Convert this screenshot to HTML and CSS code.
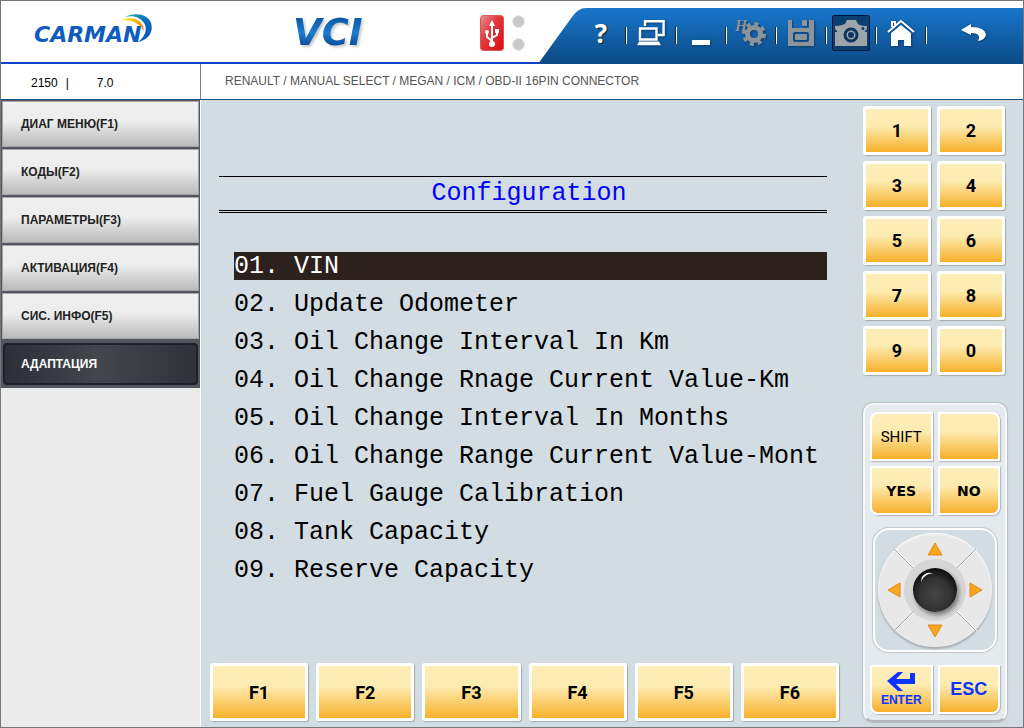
FILE: index.html
```html
<!DOCTYPE html>
<html lang="ru">
<head>
    <meta charset="UTF-8">
    <meta name="viewport" content="width=device-width, initial-scale=1.0">
    <title>Carman VCI</title>
    <link rel="stylesheet" href="styles.css">
</head>
<body>
    <div class="app">
        <header class="header">
            <div class="brand">
                <svg width="124" height="40" viewBox="0 0 124 40" role="img" aria-label="Carman">
                    <defs>
                        <linearGradient id="swoosh" x1="0" y1="0" x2="1" y2="1">
                            <stop offset="0" stop-color="#1fb5a0"/>
                            <stop offset="0.5" stop-color="#0d6ec0"/>
                            <stop offset="1" stop-color="#0a4fb8"/>
                        </linearGradient>
                        <linearGradient id="flame" x1="0" y1="0" x2="1" y2="1">
                            <stop offset="0" stop-color="#fff200"/>
                            <stop offset="1" stop-color="#e0641c"/>
                        </linearGradient>
                    </defs>
                    <text class="brand-text" x="0" y="32">CARMAN</text>
                    <path fill="url(#swoosh)" d="M91 7C101 2 114 4 117 13C120 22 114 30 104 32C111 27 114 19 110 13C106 7 99 5 91 7Z"/>
                    <path fill="url(#flame)" d="M88 10C98 6 109 9 110 21C106 13 98 10 88 10Z"/>
                </svg>
            </div>
            <div class="product">
                <svg width="90" height="48" viewBox="0 0 90 48" role="img" aria-label="VCI">
                    <defs>
                        <linearGradient id="vci" x1="0" y1="0" x2="0" y2="1">
                            <stop offset="0.2" stop-color="#0c5cac"/>
                            <stop offset="0.5" stop-color="#1b7dd0"/>
                            <stop offset="0.8" stop-color="#0d4f98"/>
                        </linearGradient>
                    </defs>
                    <text class="product-text" x="0" y="39" fill="url(#vci)">VCI</text>
                </svg>
            </div>
            <div class="link-state">
                <svg width="24" height="38" viewBox="0 0 24 38" role="img" aria-label="USB">
                    <defs>
                        <linearGradient id="usb" x1="0" y1="0" x2="1" y2="1">
                            <stop offset="0" stop-color="#f09090"/>
                            <stop offset="0.4" stop-color="#e03c40"/>
                            <stop offset="1" stop-color="#e00808"/>
                        </linearGradient>
                    </defs>
                    <rect x="0.5" y="1.5" width="23" height="35" rx="3" fill="url(#usb)" stroke="#cf5a5a"/>
                    <g fill="none" stroke="#fff" stroke-width="2">
                        <path d="M12 30V10M12 27L7 23V18M12 24L17 21V17"/>
                    </g>
                    <circle cx="12" cy="30" r="3" fill="#fff"/>
                    <circle cx="7" cy="18" r="2" fill="#fff"/>
                    <path d="M12 6L15 12H9ZM15 15H19V19H15Z" fill="#fff"/>
                </svg>
                <div class="leds">
                    <span class="led"></span>
                    <span class="led"></span>
                </div>
            </div>
            <nav class="toolbar">
                <svg class="toolbar-edge" width="48" height="56" viewBox="0 0 48 56" aria-hidden="true">
                    <defs>
                        <linearGradient id="edge" x1="0" y1="0" x2="0" y2="1">
                            <stop offset="0" stop-color="#1976cc"/>
                            <stop offset="1" stop-color="#0b4a84"/>
                        </linearGradient>
                    </defs>
                    <path d="M0 56L34 9Q40 0 48 0V56Z" fill="url(#edge)"/>
                </svg>
                <div class="tools">
                    <button class="tool" type="button" aria-label="Help"><span class="tool-help">?</span></button>
                    <span class="sep"></span>
                    <button class="tool" type="button" aria-label="Connection">
                        <svg width="30" height="28" viewBox="0 0 30 28" fill="none" stroke="#fff" stroke-width="2.4">
                            <path d="M9 7V2.2H27.6V16H22"/>
                            <path d="M4 9.5H20.5V20.5H4Z"/>
                            <path d="M1 26.2H25L23 22.5H3Z" fill="#fff" stroke="none"/>
                        </svg>
                    </button>
                    <span class="sep"></span>
                    <button class="tool tool-min" type="button" aria-label="Minimize">
                        <svg width="18" height="6" viewBox="0 0 18 6"><path d="M0 0H18V5H0Z" fill="#fff"/></svg>
                    </button>
                    <span class="sep"></span>
                    <button class="tool" type="button" aria-label="Settings">
                        <svg width="34" height="30" viewBox="0 0 34 30">
                            <text class="tool-h" x="1" y="13">H</text>
                            <circle cx="20" cy="16" r="6.5" fill="none" stroke="#8c9499" stroke-width="5"/>
                            <circle cx="20" cy="16" r="10" fill="none" stroke="#8c9499" stroke-width="4" stroke-dasharray="4 3.85"/>
                        </svg>
                    </button>
                    <span class="sep"></span>
                    <button class="tool" type="button" aria-label="Save">
                        <svg width="26" height="26" viewBox="0 0 26 26">
                            <path fill="#8c9499" fill-rule="evenodd" d="M0 0H4V8H21V0H26V26H0ZM7 12Q5 12 5 14V20Q5 22 7 22H19Q21 22 21 20V14Q21 12 19 12Z"/>
                            <rect x="14" y="0" width="5" height="6" rx="1" fill="#8c9499"/>
                            <rect x="7" y="14" width="12" height="6" rx="1" fill="#8c9499"/>
                        </svg>
                    </button>
                    <span class="sep"></span>
                    <button class="tool tool-pressed" type="button" aria-label="Screenshot">
                        <svg width="32" height="26" viewBox="0 0 32 26">
                            <path fill="#9ea5a9" fill-rule="evenodd" d="M0 6Q6 6 10 4L12 0H21L23 4Q26 6 32 6V9L30 11V12H32V26H0V12H2V11L0 9ZM28 7A1.5 1.5 0 1 0 28 10A1.5 1.5 0 1 0 28 7Z"/>
                            <circle cx="16" cy="15" r="6" fill="#9ea5a9" stroke="#0a3560" stroke-width="3"/>
                            <circle cx="16" cy="15" r="3" fill="#0a3560"/>
                        </svg>
                    </button>
                    <span class="sep"></span>
                    <button class="tool" type="button" aria-label="Home">
                        <svg width="28" height="28" viewBox="0 0 28 28">
                            <path fill="#fff" d="M4 14L14 6L24 14V27H17V21H11V27H4Z"/>
                            <path fill="none" stroke="#1560a8" stroke-width="1" d="M2 15L14 5L26 15"/>
                            <path fill="none" stroke="#fff" stroke-width="2" d="M1 13L14 2L27 13M5 8V3H8V6"/>
                        </svg>
                    </button>
                    <span class="sep"></span>
                </div>
                <button class="tool tool-back" type="button" aria-label="Back">
                    <svg width="26" height="20" viewBox="0 0 26 20">
                        <path fill="#fff" d="M0 7L10 1V4Q24 4 25 12Q24 17 17 18Q21 10 10 10V12Z"/>
                    </svg>
                </button>
            </nav>
        </header>

        <div class="info">
            <div class="version"><span>2150</span><span>|</span><span class="version-num">7.0</span></div>
            <div class="path">RENAULT / MANUAL SELECT / MEGAN / ICM / OBD-II 16PIN CONNECTOR</div>
        </div>

        <div class="body">
            <aside class="sidebar">
                <div class="menu">
                    <button class="menu-item" type="button">ДИАГ МЕНЮ(F1)</button>
                    <button class="menu-item" type="button">КОДЫ(F2)</button>
                    <button class="menu-item" type="button">ПАРАМЕТРЫ(F3)</button>
                    <button class="menu-item" type="button">АКТИВАЦИЯ(F4)</button>
                    <button class="menu-item" type="button">СИС. ИНФО(F5)</button>
                    <button class="menu-item menu-item-active" type="button">АДАПТАЦИЯ</button>
                </div>
            </aside>

            <main class="work">
                <section class="screen">
                    <h1 class="screen-title">Configuration</h1>
                    <ul class="options">
                        <li class="option option-selected">01. VIN</li>
                        <li class="option">02. Update Odometer</li>
                        <li class="option">03. Oil Change Interval In Km</li>
                        <li class="option">04. Oil Change Rnage Current Value-Km</li>
                        <li class="option">05. Oil Change Interval In Months</li>
                        <li class="option">06. Oil Change Range Current Value-Mont</li>
                        <li class="option">07. Fuel Gauge Calibration</li>
                        <li class="option">08. Tank Capacity</li>
                        <li class="option">09. Reserve Capacity</li>
                    </ul>
                </section>
                <div class="fkeys">
                    <button class="key" type="button">F1</button>
                    <button class="key" type="button">F2</button>
                    <button class="key" type="button">F3</button>
                    <button class="key" type="button">F4</button>
                    <button class="key" type="button">F5</button>
                    <button class="key" type="button">F6</button>
                </div>
            </main>

            <aside class="controls">
                <div class="keypad">
                    <button class="key" type="button">1</button>
                    <button class="key" type="button">2</button>
                    <button class="key" type="button">3</button>
                    <button class="key" type="button">4</button>
                    <button class="key" type="button">5</button>
                    <button class="key" type="button">6</button>
                    <button class="key" type="button">7</button>
                    <button class="key" type="button">8</button>
                    <button class="key" type="button">9</button>
                    <button class="key" type="button">0</button>
                </div>
                <div class="pad">
                    <div class="pad-keys">
                        <button class="pad-key pad-shift" type="button">SHIFT</button>
                        <button class="pad-key pad-blank" type="button" aria-label="Blank"></button>
                        <button class="pad-key pad-yes" type="button">YES</button>
                        <button class="pad-key pad-no" type="button">NO</button>
                    </div>
                    <div class="dpad-box">
                        <div class="dpad">
                            <svg class="dpad-lines" viewBox="0 0 114 114" aria-hidden="true">
                                <path d="M16 16L98 98M98 16L16 98" stroke="#a4a6a8"/>
                                <path d="M17 16L99 98M99 16L17 98" stroke="#fff"/>
                                <circle cx="57" cy="57" r="31" fill="#d6d6d6"/>
                            </svg>
                            <button class="arrow arrow-up" type="button" aria-label="Up">
                                <svg width="16" height="14" viewBox="0 0 16 14"><path d="M8 1L15 13H1Z"/></svg>
                            </button>
                            <button class="arrow arrow-left" type="button" aria-label="Left">
                                <svg width="14" height="16" viewBox="0 0 14 16"><path d="M1 8L13 1V15Z"/></svg>
                            </button>
                            <span class="knob"></span>
                            <button class="arrow arrow-right" type="button" aria-label="Right">
                                <svg width="14" height="16" viewBox="0 0 14 16"><path d="M13 8L1 1V15Z"/></svg>
                            </button>
                            <button class="arrow arrow-down" type="button" aria-label="Down">
                                <svg width="16" height="14" viewBox="0 0 16 14"><path d="M8 13L15 1H1Z"/></svg>
                            </button>
                        </div>
                    </div>
                    <div class="pad-keys">
                        <button class="pad-key pad-enter" type="button">
                            <svg width="28" height="19" viewBox="0 0 28 19" aria-hidden="true">
                                <path fill="#0c34ff" d="M0 9L11 0H16L9 7H23V1H28V12H9L16 19H11Z"/>
                            </svg>
                            ENTER
                        </button>
                        <button class="pad-key pad-esc" type="button">ESC</button>
                    </div>
                </div>
            </aside>
        </div>
    </div>
</body>
</html>
```

FILE: styles.css
```css
* {
    box-sizing: border-box;
}
body {
    margin: 0;
    font-family: "Liberation Sans", Arial, sans-serif;
    font-size: 12px;
    color: #000;
}
button {
    margin: 0;
    padding: 0;
    border: none;
    background: none;
    font-family: inherit;
    cursor: pointer;
}
svg {
    display: block;
}
.app {
    display: flex;
    flex-direction: column;
    min-height: 100vh;
    border: 1px solid #777;
    background: #fff;
}

/* header */
.header {
    display: flex;
    height: 63px;
    border-bottom: 2px solid #1044c8;
}
.brand {
    width: 292px;
    padding: 9px 0 0 33px;
}
.brand-text {
    font: italic bold 22px "DejaVu Sans", sans-serif;
    fill: #0f5cc0;
}
.product {
    width: 187px;
    padding-top: 5px;
}
.product-text {
    font: italic bold 37px "DejaVu Sans", sans-serif;
    filter: drop-shadow(2px 2px 1px #ccc);
}
.link-state {
    display: flex;
    gap: 8px;
    padding-top: 13px;
}
.leds {
    display: flex;
    flex-direction: column;
    gap: 10px;
    padding-top: 1px;
}
.led {
    width: 13px;
    height: 13px;
    border: 1px solid #ebebeb;
    border-radius: 50%;
    background: #c9c9c9;
}
.toolbar {
    display: flex;
    height: 56px;
    margin: 7px 0 0 auto;
}
.tools {
    display: flex;
    gap: 5px;
    margin-left: -4px;
    padding-right: 28px;
    background: linear-gradient(#1976cc, #0b4a84) 4px 0 no-repeat;
}
.tool {
    display: flex;
    align-items: center;
    justify-content: center;
    width: 38px;
    height: 36px;
    margin-top: 7px;
}
.tool svg {
    filter: drop-shadow(1px 1px 1px #0a3c6c);
}
.tool-help {
    font: bold 26px "Open Sans", sans-serif;
    color: #fff;
    text-shadow: 1px 1px 1px #222;
}
.tool-h {
    font: italic bold 16px "Liberation Serif", serif;
    fill: #8c9499;
}
.tool-min {
    align-items: flex-end;
    padding-bottom: 5px;
}
.tool-pressed {
    border: 1px solid #04163a;
    border-radius: 2px;
    background: #0b3f70;
}
.tool-back {
    width: 68px;
    height: 56px;
    margin: 0;
    padding: 0 30px 6px 0;
    background: linear-gradient(#1976cc, #0b4a84);
}
.sep {
    width: 2px;
    height: 17px;
    margin-top: 19px;
    border-left: 1px solid #222;
    background: #fff;
}

/* version and path */
.info {
    display: flex;
    height: 36px;
    border-bottom: 1px solid #0d4f80;
}
.version {
    display: flex;
    align-items: center;
    gap: 8px;
    width: 200px;
    padding: 2px 0 0 30px;
    border-right: 1px solid #808080;
}
.version-num {
    padding-left: 20px;
}
.path {
    flex: 1;
    padding: 10px 24px;
    color: #555;
}

/* left menu */
.body {
    display: flex;
    flex: 1;
}
.sidebar {
    width: 200px;
    border-right: 1px solid #fff;
    background: #ebebeb;
}
.menu {
    display: flex;
    flex-direction: column;
    gap: 2px;
    padding: 1px;
    background: #53555f;
}
.menu-item {
    height: 46px;
    padding-left: 18px;
    border: 1px solid #a4a6ac;
    background: linear-gradient(#f0f0f0 0%, #ececec 45%, #bababa 100%);
    font-size: 12px;
    font-weight: bold;
    text-align: left;
    color: #222;
}
.menu-item-active {
    height: 42px;
    margin: 2px 1px;
    border: 2px solid #1e1f28;
    border-radius: 4px;
    padding-left: 16px;
    background: linear-gradient(90deg, #2d2e37, #44464e 50%, #30323a);
    color: #fff;
}

/* diagnostic screen */
.work {
    display: flex;
    flex: 1;
    flex-direction: column;
    justify-content: space-between;
    gap: 24px;
    padding: 76px 24px 6px 9px;
    background: #d2dde3;
}
.screen {
    padding: 0 12px 0 9px;
    font-family: "Liberation Mono", "Courier New", monospace;
}
.screen-title {
    margin: 0;
    padding-left: 12px;
    border-top: 1px solid #000;
    border-bottom: 3px double #000;
    font-size: 25px;
    font-weight: normal;
    line-height: 33px;
    text-align: center;
    color: #00f;
}
.options {
    display: flex;
    flex-direction: column;
    gap: 10px;
    margin: 39px 0 0;
    padding: 0 0 0 15px;
    list-style: none;
}
.option {
    padding-top: 2px;
    font-size: 25px;
    line-height: 26px;
    white-space: nowrap;
}
.option-selected {
    background: #2d211d;
    color: #fff;
}
.fkeys {
    display: flex;
    gap: 8px;
}
.key {
    height: 49px;
    border: 3px solid #fff;
    border-radius: 3px;
    background: linear-gradient(#fdedb8 0%, #fdebb0 40%, #f7b02a 100%);
    box-shadow: 1px 1px 1px #a4a8ac;
    font-family: Roboto, "Liberation Sans", sans-serif;
    font-size: 18px;
    font-weight: bold;
    color: #000;
}
.fkeys .key {
    flex: 1;
    height: 58px;
}

/* right column */
.controls {
    width: 160px;
    padding: 6px 16px 2px 0;
    background: #d2dde3;
}
.keypad {
    display: grid;
    grid-template-columns: 68px 68px;
    gap: 6px;
}
.pad {
    margin-top: 28px;
    padding: 7px 5px 6px;
    border: 2px solid #f6f8f9;
    border-bottom-color: #b4b8bc;
    border-radius: 10px;
    background: #e5eaee;
    box-shadow: 0 0 1px 1px #b8bfc4;
}
.pad-keys {
    display: grid;
    grid-template-columns: 1fr 1fr;
    gap: 5px;
}
.pad-key {
    height: 49px;
    border: 2px solid #fff;
    background: linear-gradient(#fdedb8 0%, #fdebb0 40%, #f7b02a 100%);
    box-shadow: 1px 1px 1px #b0b4b8;
    font-size: 16px;
    color: #000;
}
.pad-shift {
    border-top-left-radius: 8px;
    font: 15px Roboto, sans-serif;
}
.pad-blank {
    border-top-right-radius: 8px;
}
.pad-yes {
    border-bottom-left-radius: 8px;
    font: bold 14px "DejaVu Sans", sans-serif;
}
.pad-no {
    border-bottom-right-radius: 8px;
    font: bold 14px "DejaVu Sans", sans-serif;
}
.pad-enter {
    display: flex;
    flex-direction: column;
    align-items: center;
    justify-content: center;
    gap: 2px;
    border-bottom-left-radius: 8px;
    font-size: 12px;
    font-weight: bold;
    color: #0c34ff;
}
.pad-esc {
    border-bottom-right-radius: 8px;
    font-size: 18px;
    font-weight: bold;
    color: #0c34ff;
}
.dpad-box {
    margin: 13px 3px;
    padding: 3px;
    border: 2px solid #fff;
    border-radius: 16px;
    background: #d2dde3;
    box-shadow: 0 0 1px 1px #c0c6ca;
}
.dpad {
    position: relative;
    display: grid;
    grid-template-columns: 32px 50px 32px;
    grid-template-rows: 32px 50px 32px;
    width: 114px;
    height: 114px;
    margin: 0 auto;
    border-radius: 50%;
    background: #e8e8e8;
    box-shadow: 0 2px 2px #a8acb0, inset 0 1px 2px #fff;
}
.dpad-lines {
    position: absolute;
    inset: 0;
}
.arrow {
    display: flex;
    align-items: center;
    justify-content: center;
    position: relative;
}
.arrow path {
    fill: #ffa41c;
    stroke: #d98a1c;
}
.arrow-up {
    grid-area: 1 / 2;
}
.arrow-left {
    grid-area: 2 / 1;
}
.arrow-right {
    grid-area: 2 / 3;
}
.arrow-down {
    grid-area: 3 / 2;
}
.knob {
    position: relative;
    grid-area: 2 / 2;
    place-self: center;
    width: 44px;
    height: 44px;
    border-radius: 50%;
    background: radial-gradient(circle at 50% 60%, #444 0%, #333 45%, #0c0c0c 75%);
    box-shadow: 2px 3px 4px #777;
}
.knob::before {
    content: "";
    position: absolute;
    top: 5px;
    left: 8px;
    width: 14px;
    height: 10px;
    border-top: 2px solid #eee;
    border-radius: 50%;
    rotate: -35deg;
}
```
